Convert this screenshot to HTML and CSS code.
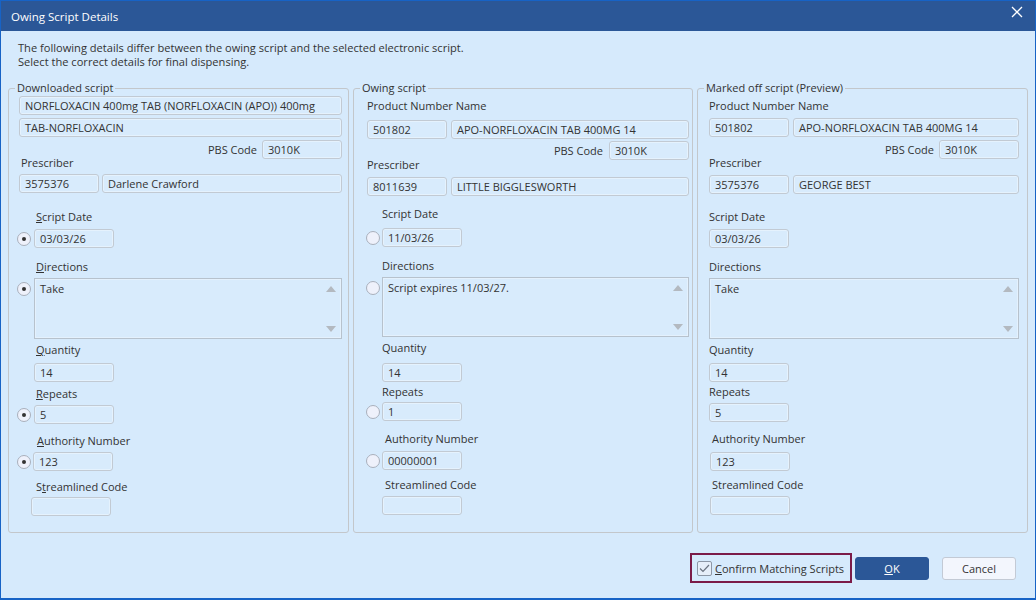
FILE: index.html
```html
<!DOCTYPE html>
<html>
<head>
<meta charset="utf-8">
<link rel="stylesheet" href="styles.css">
</head>
<body>
<div class="window">
  <div class="titlebar">
    <span class="title">Owing Script Details</span>
    <svg class="close" width="12" height="12" viewBox="0 0 12 12"><path d="M1 1L11 11M11 1L1 11" stroke="#fff" stroke-width="1.3"/></svg>
  </div>
  <div class="content">
    <p class="intro">The following details differ between the owing script and the selected electronic script.<br>Select the correct details for final dispensing.</p>
    <div class="columns">
      <fieldset class="group g1">
        <legend>Downloaded script</legend>
        <div class="gbody">
          <div class="field wide">NORFLOXACIN 400mg TAB (NORFLOXACIN (APO)) 400mg</div>
          <div class="field wide mt3">TAB-NORFLOXACIN</div>
          <div class="pbs mt3"><span class="lbl">PBS Code</span><div class="field small">3010K</div></div>
          <div class="lbl mtn3 pl2">Prescriber</div>
          <div class="pair mt4"><div class="field small">3575376</div><div class="field grow">Darlene Crawford</div></div>
          <div class="lbl ind mt17"><u>S</u>cript Date</div>
          <div class="rrow mt5"><span class="radio on"></span><div class="field small">03/03/26</div></div>
          <div class="lbl ind mt12"><u>D</u>irections</div>
          <div class="rrow top mt4"><span class="radio on"></span><div class="memo">Take<span class="up"></span><span class="dn"></span></div></div>
          <div class="lbl ind mt4"><u>Q</u>uantity</div>
          <div class="rrow mt6"><span class="radio none"></span><div class="field small">14</div></div>
          <div class="lbl ind mt5"><u>R</u>epeats</div>
          <div class="rrow mt4"><span class="radio on"></span><div class="field small">5</div></div>
          <div class="lbl ind2 mt10"><u>A</u>uthority Number</div>
          <div class="rrow mt4"><span class="radio on"></span><div class="field small shl1">123</div></div>
          <div class="lbl ind mt9">S<u>t</u>reamlined Code</div>
          <div class="rrow mt3"><span class="radio none"></span><div class="field small shl3"></div></div>
        </div>
      </fieldset>
      <fieldset class="group g2">
        <legend>Owing script</legend>
        <div class="gbody">
          <div class="lbl mt3">Product Number Name</div>
          <div class="pair mt7"><div class="field small">501802</div><div class="field grow">APO-NORFLOXACIN TAB 400MG 14</div></div>
          <div class="pbs mt2"><span class="lbl">PBS Code</span><div class="field small">3010K</div></div>
          <div class="lbl mtn2">Prescriber</div>
          <div class="pair mt5"><div class="field small">8011639</div><div class="field grow">LITTLE BIGGLESWORTH</div></div>
          <div class="lbl ind mt11">Script Date</div>
          <div class="rrow mt7"><span class="radio"></span><div class="field small">11/03/26</div></div>
          <div class="lbl ind mt12">Directions</div>
          <div class="rrow top mt4"><span class="radio"></span><div class="memo m60">Script expires 11/03/27.<span class="up"></span><span class="dn"></span></div></div>
          <div class="lbl ind mt4">Quantity</div>
          <div class="rrow mt8"><span class="radio none"></span><div class="field small">14</div></div>
          <div class="lbl ind mt3">Repeats</div>
          <div class="rrow mt3"><span class="radio"></span><div class="field small">1</div></div>
          <div class="lbl ind2 mt11">Authority Number</div>
          <div class="rrow mt5"><span class="radio"></span><div class="field small">00000001</div></div>
          <div class="lbl ind2 mt8">Streamlined Code</div>
          <div class="rrow mt4"><span class="radio none"></span><div class="field small"></div></div>
        </div>
      </fieldset>
      <fieldset class="group g3">
        <legend>Marked off script (Preview)</legend>
        <div class="gbody">
          <div class="pair mt3"><span class="lbl pn">Product Number</span><span class="lbl">Name</span></div>
          <div class="pair mt5"><div class="field small">501802</div><div class="field grow">APO-NORFLOXACIN TAB 400MG 14</div></div>
          <div class="pbs mt3"><span class="lbl">PBS Code</span><div class="field small">3010K</div></div>
          <div class="lbl mtn3">Prescriber</div>
          <div class="pair mt5"><div class="field small">3575376</div><div class="field grow">GEORGE BEST</div></div>
          <div class="lbl mt16">Script Date</div>
          <div class="field small mt5">03/03/26</div>
          <div class="lbl mt12">Directions</div>
          <div class="memo solo mt4">Take<span class="up"></span><span class="dn"></span></div>
          <div class="lbl mt4">Quantity</div>
          <div class="field small mt6">14</div>
          <div class="lbl mt3">Repeats</div>
          <div class="field small mt4">5</div>
          <div class="lbl ind3 mt10">Authority Number</div>
          <div class="field small mt6 shr1">123</div>
          <div class="lbl ind3 mt7">Streamlined Code</div>
          <div class="field small mt4 shr1"></div>
        </div>
      </fieldset>
    </div>
    <div class="footer">
      <label class="confirm"><span class="check"><svg width="11" height="9" viewBox="0 0 11 9"><path d="M1 4.5L4 7.5L10 1" fill="none" stroke="#6b7380" stroke-width="1.2"/></svg></span><span><u>C</u>onfirm Matching Scripts</span></label>
      <button class="btn ok"><u>O</u>K</button>
      <button class="btn cancel">Cancel</button>
    </div>
  </div>
</div>
</body>
</html>
```

FILE: styles.css
```css
* { box-sizing: border-box; }
html, body { margin: 0; padding: 0; }
body {
  font-family: "Open Sans", "Noto Sans", sans-serif;
  font-size: 11px;
  color: #333;
  background: #d6eafc;
}
.window {
  width: 1036px;
  height: 600px;
  border: 1px solid #1763c6;
  border-bottom-width: 2px;
  background: #d6eafc;
  display: flex;
  flex-direction: column;
}
.titlebar {
  height: 30px;
  background: #2b5797;
  color: #fff;
  display: flex;
  align-items: center;
  justify-content: space-between;
  padding: 0 11px 0 10px;
  flex: none;
}
.title { font-size: 11.5px; }
.close { margin-top: -8px; margin-right: 1px; }
.content { padding: 10px 7px 0 7px; flex: 1; }
.intro { margin: 0 0 11px 10px; line-height: 14px; font-size: 11.1px; }
.columns { display: flex; gap: 4px; height: 453px; }
.group {
  margin: 0;
  padding: 0;
  border: 1px solid #c3c7cb;
  border-radius: 3px;
  min-width: 0;
}
.g1 { width: 342px; }
.g2 { width: 341px; }
.g3 { width: 332px; }
legend {
  margin-left: 6px;
  padding: 0 2px;
  line-height: 16px;
  font-size: 11px;
}
.gbody { display: flex; flex-direction: column; align-items: flex-start; }
.g1 .gbody { padding: 0 6px 0 10px; }
.g2 .gbody { padding: 0 3px 0 13px; }
.g3 .gbody { padding: 0 8px 0 11px; }
.lbl { line-height: 14px; white-space: nowrap; }
.pl2 { padding-left: 2px; }
.ind { padding-left: 17px; }
.ind2 { padding-left: 18px; }
.ind3 { padding-left: 3px; }
.g2 .ind { padding-left: 15px; }
.field {
  height: 19px;
  line-height: 17px;
  border: 1px solid #c2cad3;
  border-radius: 3px;
  background: #d8ebfc;
  padding: 0 5px;
  white-space: nowrap;
  overflow: hidden;
  box-shadow: inset 0 0 0 1px rgba(255,255,255,0.35);
}
.wide { align-self: stretch; }
.small { width: 80px; flex: none; }
.grow { flex: 1; }
.pair { display: flex; gap: 4px; align-self: stretch; }
.g1 .pair { gap: 3px; }
.pn { width: 85px; }
.pbs { display: flex; align-items: center; gap: 5px; align-self: stretch; justify-content: flex-end; }
.g2 .pbs { gap: 6px; }
.rrow { display: flex; align-items: center; gap: 3px; margin-left: -2px; align-self: stretch; }
.g2 .rrow { margin-left: -1px; gap: 2px; }
.rrow.top { align-items: flex-start; }
.rrow.top .radio { margin-top: 4px; }
.radio {
  width: 14px;
  height: 14px;
  border-radius: 50%;
  border: 1px solid #a9b0bc;
  background: #eef1fb;
  flex: none;
  position: relative;
}
.radio.on::after {
  content: "";
  position: absolute;
  left: 4px; top: 4px;
  width: 4px; height: 4px;
  border-radius: 50%;
  background: #333;
}
.radio.none { visibility: hidden; }
.memo {
  height: 61px;
  flex: 1;
  align-self: stretch;
  border: 1px solid #b7c2cd;
  background: #d8ebfc;
  padding: 2px 5px;
  line-height: 15px;
  position: relative;
  box-shadow: inset 0 0 0 1px rgba(255,255,255,0.3);
}
.memo.solo { flex: none; }
.m60 { height: 60px; }
.up, .dn {
  position: absolute;
  right: 5px;
  width: 0; height: 0;
  border-left: 5px solid transparent;
  border-right: 5px solid transparent;
}
.up { top: 7px; border-bottom: 6px solid #b3b9c0; }
.dn { bottom: 6px; border-top: 6px solid #b3b9c0; }
.shl1 { margin-left: -1px; }
.shl3 { margin-left: -3px; }
.shr1 { margin-left: 1px; }
.mt2 { margin-top: 2px; }
.mt3 { margin-top: 3px; }
.mt4 { margin-top: 4px; }
.mt5 { margin-top: 5px; }
.mt6 { margin-top: 6px; }
.mt7 { margin-top: 7px; }
.mt8 { margin-top: 8px; }
.mt9 { margin-top: 9px; }
.mt10 { margin-top: 10px; }
.mt11 { margin-top: 11px; }
.mt12 { margin-top: 12px; }
.mt16 { margin-top: 16px; }
.mt17 { margin-top: 17px; }
.mtn2 { margin-top: -2px; }
.mtn3 { margin-top: -3px; }
.footer {
  display: flex;
  justify-content: flex-end;
  align-items: center;
  margin-top: 20px;
  padding-right: 12px;
}
.confirm {
  display: flex;
  align-items: center;
  gap: 3px;
  width: 162px;
  height: 30px;
  border: 2px solid #7b1b48;
  padding-left: 5px;
  margin-right: 3px;
  white-space: nowrap;
}
.check {
  width: 15px; height: 15px;
  border: 1px solid #8d97a6;
  border-radius: 2px;
  background: #e6eef9;
  display: flex; align-items: center; justify-content: center;
}
.btn {
  width: 74px;
  height: 23px;
  border-radius: 3px;
  font-family: inherit;
  font-size: 11px;
  padding: 0;
}
.ok { background: #2b5797; color: #fff; border: 1px solid #2b5797; }
.cancel { background: #f3f6fd; color: #333; border: 1px solid #c3cad5; margin-left: 13px; }
```
